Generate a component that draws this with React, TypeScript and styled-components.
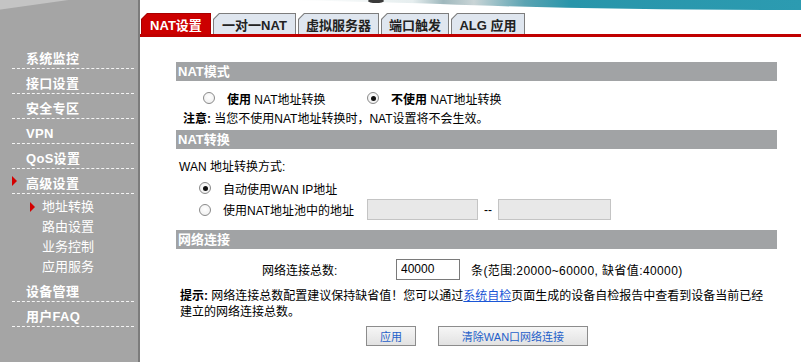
import styled, { createGlobalStyle } from "styled-components";

const FONT = `"Liberation Sans", "Noto Sans CJK SC", sans-serif`;

const GlobalStyle = createGlobalStyle`
  html, body {
    margin: 0;
    padding: 0;
    background: #fff;
  }
  body {
    font-family: ${FONT};
    font-size: 12px;
    color: #000;
    overflow: hidden;
  }
`;

const Page = styled.div`
  display: flex;
  width: 801px;
  height: 362px;
  overflow: hidden;
`;

/* ---------- left menu ---------- */

const Sidebar = styled.div`
  width: 138px;
  flex-shrink: 0;
  border-right: 2px solid #7c7c7c;
  background: linear-gradient(172deg, #c4c4c4 0, #c4c4c4 9px, #a5a5a5 10px, #a5a5a5 100%);
  padding-top: 44px;
`;

const MenuItem = styled.div`
  display: flex;
  align-items: flex-end;
  height: 25px;
  margin: 0 4px 0 12px;
  padding: 0 0 1px 14px;
  box-sizing: border-box;
  border-bottom: 1px dashed #f4f4f4;
  color: #fff;
  font-weight: bold;
  font-size: 13px;
  line-height: 16px;
  letter-spacing: 0.3px;
`;

const SubMenu = styled.div`
  padding-top: 3px;
`;

const SubItem = styled.div`
  display: flex;
  align-items: center;
  height: 20px;
  padding-left: 42px;
  color: #fff;
  font-size: 13px;
  line-height: 16px;
`;

const Marker = styled.span<{ $offset: number }>`
  width: 0;
  height: 0;
  border-left: 5px solid #d40000;
  border-top: 5px solid transparent;
  border-bottom: 5px solid transparent;
  margin-left: ${(p) => p.$offset}px;
  margin-right: ${(p) => -p.$offset - 5}px;
  align-self: center;
`;

/* ---------- main ---------- */

const Main = styled.div`
  flex: 1;
  display: flex;
  flex-direction: column;
`;

const Banner = styled.svg`
  display: block;
  width: 661px;
  height: 11px;
  margin-bottom: 2px;
`;

const TabBar = styled.div`
  display: flex;
  align-items: flex-end;
  gap: 2px;
  height: 21px;
  padding-left: 1px;
`;

const TabOuter = styled.div<{ $active?: boolean; $w: number }>`
  width: ${(p) => p.$w}px;
  height: 21px;
  padding: 1px 1px 0 1px;
  box-sizing: border-box;
  background: ${(p) => (p.$active ? "#a80000" : "#7d7d7d")};
  clip-path: polygon(6px 0, 100% 0, 100% 100%, 0 100%, 0 6px);
`;

const TabInner = styled.div<{ $active?: boolean }>`
  height: 100%;
  display: flex;
  align-items: center;
  justify-content: center;
  background: ${(p) => (p.$active ? "#cc0000" : "#dfe6ef")};
  color: ${(p) => (p.$active ? "#fff" : "#222")};
  font-weight: bold;
  font-size: 13px;
  clip-path: polygon(5.5px 0, 100% 0, 100% 100%, 0 100%, 0 5.5px);
`;

const RedLine = styled.div`
  height: 3px;
  background: #c00000;
`;

const Content = styled.div`
  padding: 25px 0 0 36px;
`;

const Section = styled.div<{ $gap?: number }>`
  width: 601px;
  margin-top: ${(p) => p.$gap ?? 0}px;
`;

const SectionHeader = styled.div`
  height: 19px;
  line-height: 19px;
  background: #a1a3a5;
  color: #fff;
  font-weight: bold;
  font-size: 13px;
  padding-left: 2px;
`;

const Row = styled.div<{ $h: number; $top?: number; $left?: number }>`
  display: flex;
  align-items: center;
  height: ${(p) => p.$h}px;
  margin-top: ${(p) => p.$top ?? 0}px;
  padding-left: ${(p) => p.$left ?? 0}px;
  white-space: nowrap;
`;

const RadioItem = styled.label<{ $w?: number }>`
  display: flex;
  align-items: center;
  gap: 12px;
  width: ${(p) => (p.$w ? `${p.$w}px` : "auto")};
  flex-shrink: 0;
`;

const Radio = styled.input.attrs({ type: "radio" })`
  appearance: none;
  margin: 0;
  width: 12px;
  height: 12px;
  border-radius: 50%;
  border: 1px solid #8a8a8a;
  background: radial-gradient(circle at 50% 40%, #ffffff 0, #f2f2f2 70%, #dcdcdc 100%);
  box-sizing: border-box;
  display: grid;
  place-items: center;
  &:checked::after {
    content: "";
    width: 5px;
    height: 5px;
    border-radius: 50%;
    background: #111;
  }
`;

const TextBox = styled.input<{ $w: number }>`
  width: ${(p) => p.$w}px;
  height: 21px;
  box-sizing: border-box;
  margin: 0;
  padding: 0 4px;
  font-family: ${FONT};
  font-size: 12px;
  color: #000;
  border: 1px solid ${(p) => (p.disabled ? "#c4c4c4" : "#7a7a7a")};
  background: ${(p) => (p.disabled ? "#e8e8e8" : "#fff")};
  outline: none;
`;

const Dash = styled.span`
  margin: 0 6px 0 6px;
`;

const FieldLabel = styled.span`
  width: 134px;
  flex-shrink: 0;
`;

const Hint = styled.span`
  margin-left: 11px;
  letter-spacing: 0.4px;
`;

const Tip = styled.div`
  margin-top: 8px;
  padding-left: 4px;
`;

const TipLine = styled.div`
  height: 16px;
  line-height: 16px;
  white-space: nowrap;
`;

const Link = styled.a`
  color: #1a56d6;
  text-decoration: underline;
`;

const Buttons = styled.div`
  display: flex;
  gap: 22px;
  margin-top: 6px;
  padding-left: 190px;
`;

const Button = styled.button<{ $w: number }>`
  width: ${(p) => p.$w}px;
  height: 20px;
  padding: 0;
  font-family: ${FONT};
  font-size: 11px;
  color: #1f5fc9;
  border: 1px solid #8c8c8c;
  background: linear-gradient(#f6f6f6, #e2e2e2);
`;

const tabs = [
  { label: "NAT设置", w: 70, active: true },
  { label: "一对一NAT", w: 83 },
  { label: "虚拟服务器", w: 81 },
  { label: "端口触发", w: 68 },
  { label: "ALG 应用", w: 74 },
];

const mainMenu = ["系统监控", "接口设置", "安全专区", "VPN", "QoS设置"];
const subMenu = ["地址转换", "路由设置", "业务控制", "应用服务"];

export default function App() {
  return (
    <>
      <GlobalStyle />
      <Page>
        <Sidebar>
          {mainMenu.map((m) => (
            <MenuItem key={m}>{m}</MenuItem>
          ))}
          <MenuItem>
            <Marker $offset={-14} />
            高级设置
          </MenuItem>
          <SubMenu>
            {subMenu.map((s, i) => (
              <SubItem key={s}>
                {i === 0 && <Marker $offset={-12} />}
                {s}
              </SubItem>
            ))}
          </SubMenu>
          <MenuItem>设备管理</MenuItem>
          <MenuItem>用户FAQ</MenuItem>
        </Sidebar>

        <Main>
          <Banner viewBox="0 0 661 11" preserveAspectRatio="none">
            <defs>
              <linearGradient id="bn" x1="0" x2="1" y1="0" y2="0">
                <stop offset="0" stopColor="#ffffff" />
                <stop offset="0.24" stopColor="#e6eeef" />
                <stop offset="0.3" stopColor="#9fb8bd" />
                <stop offset="0.36" stopColor="#c9d4d6" />
                <stop offset="0.46" stopColor="#5aa3b2" />
                <stop offset="0.55" stopColor="#2895aa" />
                <stop offset="1" stopColor="#2c9bb1" />
              </linearGradient>
            </defs>
            <path d="M150 0 L661 0 L661 10 C520 10 400 8 300 4 C240 2 190 1 150 0 Z" fill="url(#bn)" />
            <ellipse cx="236" cy="1" rx="8" ry="2" fill="#3a3a3a" />
          </Banner>
          <TabBar>
            {tabs.map((t) => (
              <TabOuter key={t.label} $active={t.active} $w={t.w}>
                <TabInner $active={t.active}>{t.label}</TabInner>
              </TabOuter>
            ))}
          </TabBar>
          <RedLine />

          <Content>
            <Section>
              <SectionHeader>NAT模式</SectionHeader>
              <Row $h={20} $top={7} $left={27}>
                <RadioItem $w={164}>
                  <Radio name="nat" />
                  <span>
                    <b>使用</b> NAT地址转换
                  </span>
                </RadioItem>
                <RadioItem>
                  <Radio name="nat" defaultChecked />
                  <span>
                    <b>不使用</b> NAT地址转换
                  </span>
                </RadioItem>
              </Row>
              <Row $h={18} $left={7}>
                <span>
                  <b>注意:</b> 当您不使用NAT地址转换时，NAT设置将不会生效。
                </span>
              </Row>
            </Section>

            <Section $gap={4}>
              <SectionHeader>NAT转换</SectionHeader>
              <Row $h={20} $top={6} $left={3}>
                WAN 地址转换方式:
              </Row>
              <Row $h={20} $top={3} $left={23}>
                <RadioItem>
                  <Radio name="wan" defaultChecked />
                  <span>自动使用WAN IP地址</span>
                </RadioItem>
              </Row>
              <Row $h={23} $left={23}>
                <RadioItem $w={168}>
                  <Radio name="wan" />
                  <span>使用NAT地址池中的地址</span>
                </RadioItem>
                <TextBox $w={111} disabled />
                <Dash>--</Dash>
                <TextBox $w={113} disabled />
              </Row>
            </Section>

            <Section $gap={9}>
              <SectionHeader>网络连接</SectionHeader>
              <Row $h={22} $top={9} $left={86}>
                <FieldLabel>网络连接总数:</FieldLabel>
                <TextBox $w={64} defaultValue="40000" />
                <Hint>条(范围:20000~60000, 缺省值:40000)</Hint>
              </Row>
              <Tip>
                <TipLine>
                  <b>提示:</b> 网络连接总数配置建议保持缺省值！您可以通过
                  <Link href="#">系统自检</Link>
                  页面生成的设备自检报告中查看到设备当前已经
                </TipLine>
                <TipLine>建立的网络连接总数。</TipLine>
              </Tip>
              <Buttons>
                <Button $w={50}>应用</Button>
                <Button $w={150}>清除WAN口网络连接</Button>
              </Buttons>
            </Section>
          </Content>
        </Main>
      </Page>
    </>
  );
}
